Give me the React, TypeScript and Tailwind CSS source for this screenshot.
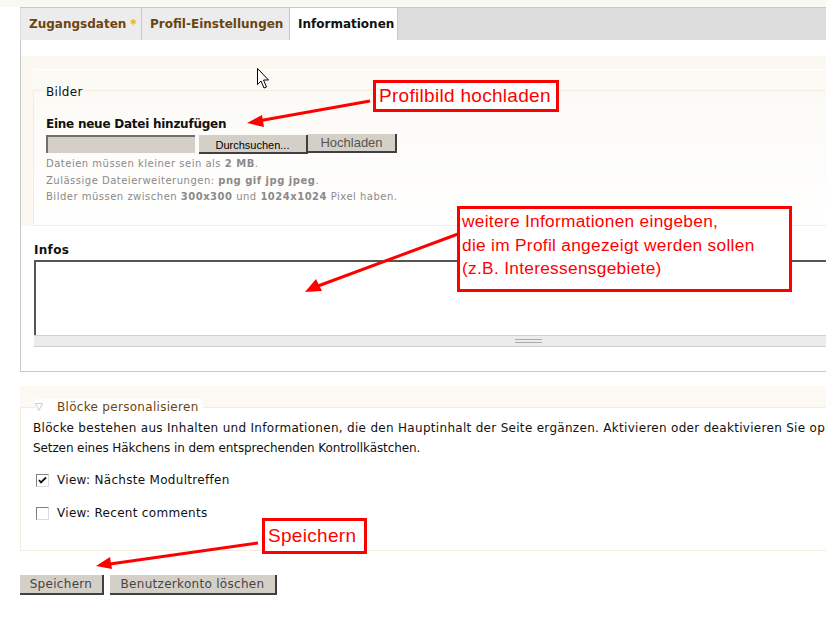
import React from 'react';

const red = '#ff0000';

function Checkbox({ checked }: { checked?: boolean }) {
  return (
    <span className="inline-flex h-[13px] w-[13px] items-center justify-center border border-t-[#808080] border-l-[#808080] border-b-[#dcdcdc] border-r-[#dcdcdc] bg-white">
      {checked && (
        <svg width="9" height="9" viewBox="0 0 9 9">
          <path d="M1 4 L3 6.5 L8 1.5" stroke="#111" strokeWidth="1.8" fill="none" />
        </svg>
      )}
    </span>
  );
}

function Tab({ label, width, active, star }: { label: string; width: string; active?: boolean; star?: boolean }) {
  return (
    <div
      className={
        'flex h-full items-center border-r border-[#c8c8c8] pl-[8px] text-[12px] font-bold ' +
        width +
        (active ? ' bg-white text-[#111]' : ' bg-[#ececec] text-[#6b4511]')
      }
    >
      {label}
      {star && <span className="ml-[4px] text-[#f0ac00]">*</span>}
    </div>
  );
}

function Annotations() {
  return (
    <>
      <svg className="pointer-events-none absolute left-0 top-0" width="826" height="629">
        <g stroke={red} strokeWidth="3" fill={red}>
          <line x1="370" y1="101" x2="258" y2="121" />
          <line x1="458" y1="234" x2="318" y2="286" />
          <line x1="258" y1="543" x2="110" y2="564" />
        </g>
        <g fill={red}>
          <polygon points="247,123 262,115 264,127" />
          <polygon points="305,292 316,279 322,291" />
          <polygon points="96,566 110,557 112,569" />
        </g>
        {/* mouse cursor */}
        <path
          d="M257.5 68.5 L257.5 84.5 L261 81 L264 88 L266.5 87 L263.5 80 L268.5 80 Z"
          fill="white"
          stroke="black"
          strokeWidth="1"
        />
      </svg>
      <div className="absolute left-[373px] top-[80px] flex h-[32px] w-[186px] items-center border-[3px] border-[#ff0000] bg-white pl-[3px] font-['Liberation_Sans',Arial,sans-serif] text-[19px] text-[#ff0000]">
        Profilbild hochladen
      </div>
      <div className="absolute left-[457px] top-[206px] h-[86px] w-[335px] border-[3px] border-[#ff0000] bg-white pl-[2px] pt-[1px] font-['Liberation_Sans',Arial,sans-serif] text-[17.3px] leading-[23.5px] text-[#ff0000]">
        <div>weitere Informationen eingeben,</div>
        <div>die im Profil angezeigt werden sollen</div>
        <div>(z.B. Interessensgebiete)</div>
      </div>
      <div className="absolute left-[262px] top-[518px] flex h-[36px] w-[105px] items-center border-[3px] border-[#ff0000] bg-white pl-[3px] font-['Liberation_Sans',Arial,sans-serif] text-[19px] text-[#ff0000]">
        Speichern
      </div>
    </>
  );
}

export default function App() {
  return (
    <div className="relative h-[629px] w-[826px] overflow-hidden bg-white font-['DejaVu_Sans',Verdana,sans-serif] text-[12px] tracking-[0.3px] text-[#111]">
      <div className="h-[7px] bg-[#faf8f3]" />
      <div className="ml-[20px]">
        {/* tabs */}
        <div className="flex h-[33px] border-t border-[#c8c8c8] bg-[#dddddd] tracking-normal">
          <div className="w-px" />
          <Tab label="Zugangsdaten" width="w-[121px]" star />
          <Tab label="Profil-Einstellungen" width="w-[148px]" />
          <Tab label="Informationen" width="w-[108px]" active />
        </div>

        {/* panel */}
        <div className="border-b border-l border-[#c8c8c8] pb-[24px] pt-[16px]">
          <div className="bg-[#faf8f1] pt-[13px] pl-[12px]">
            <div className="border-t border-white bg-gradient-to-b from-[#fbf9f3] to-[#fefdfb] pt-[20px]">
              <div className="relative h-[136px] border-b border-l border-t border-[#f4eddc] bg-gradient-to-b from-[#fcfaf6] to-white pl-[12px] pt-[25px]">
                <span className="absolute -top-[7px] left-[11px] bg-[#fcfaf5] px-[1px] leading-[16px]">
                  Bilder
                </span>
                <div className="font-bold leading-[16px] tracking-[-0.25px]">Eine neue Datei hinzufügen</div>
                <div className="mt-[3px] flex h-[19px] items-start tracking-normal">
                  <div className="h-[18px] w-[149px] border-l-2 border-t-2 border-[#6f6f6f] bg-[#d4d0c8]" />
                  <div className="ml-[4px] flex h-[19px] w-[109px] items-end justify-center border-b-2 border-r-2 border-b-[#404040] border-r-[#404040] bg-[#d4d0c8] pb-[1px] font-['Liberation_Sans',Tahoma,sans-serif] text-[11px] leading-none text-black">
                    Durchsuchen...
                  </div>
                  <div className="-mt-px flex h-[19px] w-[89px] items-center justify-center border-b-2 border-r-2 border-b-[#404040] border-r-[#404040] bg-[#d4d0c8] font-['Liberation_Sans',Tahoma,sans-serif] text-[13px] text-[#555]">
                    Hochladen
                  </div>
                </div>
                <div className="mt-[2px] text-[10px] leading-[16.5px] tracking-[0.5px] text-[#8a8a8a]">
                  <div>
                    Dateien müssen kleiner sein als <b>2 MB</b>.
                  </div>
                  <div>
                    Zulässige Dateierweiterungen: <b>png gif jpg jpeg</b>.
                  </div>
                  <div>
                    Bilder müssen zwischen <b>300x300</b> und <b>1024x1024</b> Pixel haben.
                  </div>
                </div>
              </div>
            </div>
          </div>

          <div className="pl-[13px] pt-[16px]">
            <div className="font-bold leading-[16px]">Infos</div>
            <div className="mt-[2px] h-[75px] w-[900px] border-l-2 border-t-2 border-[#555] bg-white" />
            <div className="flex h-[12px] w-[900px] items-center border-b border-t border-[#d0d0d0] bg-[#ececec] pl-[481px]">
              <div className="h-[4px] w-[27px] border-b border-t border-[#aaa]" />
            </div>
          </div>
        </div>

        {/* blocks */}
        <div className="mt-[14px] bg-[#fbf9f2] pt-[21px]">
          <div className="relative h-[144px] border-b border-l border-t border-[#f4eddc] bg-white pl-[12px] pt-[10px]">
            <span className="absolute -top-[9px] left-[14px] flex items-center bg-white pr-[4px] leading-[16px]">
              <span className="mr-[14px] text-[10px] text-[#a8a8a8]">▽</span>
              <span className="text-[#6b4511]">Blöcke personalisieren</span>
            </span>
            <div className="whitespace-nowrap leading-[20px]">
              Blöcke bestehen aus Inhalten und Informationen, die den Hauptinhalt der Seite ergänzen. Aktivieren oder deaktivieren Sie op
            </div>
            <div className="whitespace-nowrap leading-[20px] tracking-[-0.1px]">
              Setzen eines Häkchens in dem entsprechenden Kontrollkästchen.
            </div>
            <div className="mt-[14px] flex items-center gap-[8px] pl-[3px] leading-[16px]">
              <Checkbox checked />
              <span>View: Nächste Modultreffen</span>
            </div>
            <div className="mt-[17px] flex items-center gap-[8px] pl-[3px] leading-[16px]">
              <Checkbox />
              <span>View: Recent comments</span>
            </div>
          </div>
        </div>

        <div className="mt-[24px] flex gap-[6px]">
          <button className="h-[20px] w-[84px] border-b-2 border-r-2 border-b-[#404040] border-r-[#404040] bg-[#d4d0c8] text-[12px] text-[#444]">
            Speichern
          </button>
          <button className="h-[20px] w-[167px] border-b-2 border-r-2 border-b-[#404040] border-r-[#404040] bg-[#d4d0c8] text-[12px] text-[#444]">
            Benutzerkonto löschen
          </button>
        </div>
      </div>
      <Annotations />
    </div>
  );
}
